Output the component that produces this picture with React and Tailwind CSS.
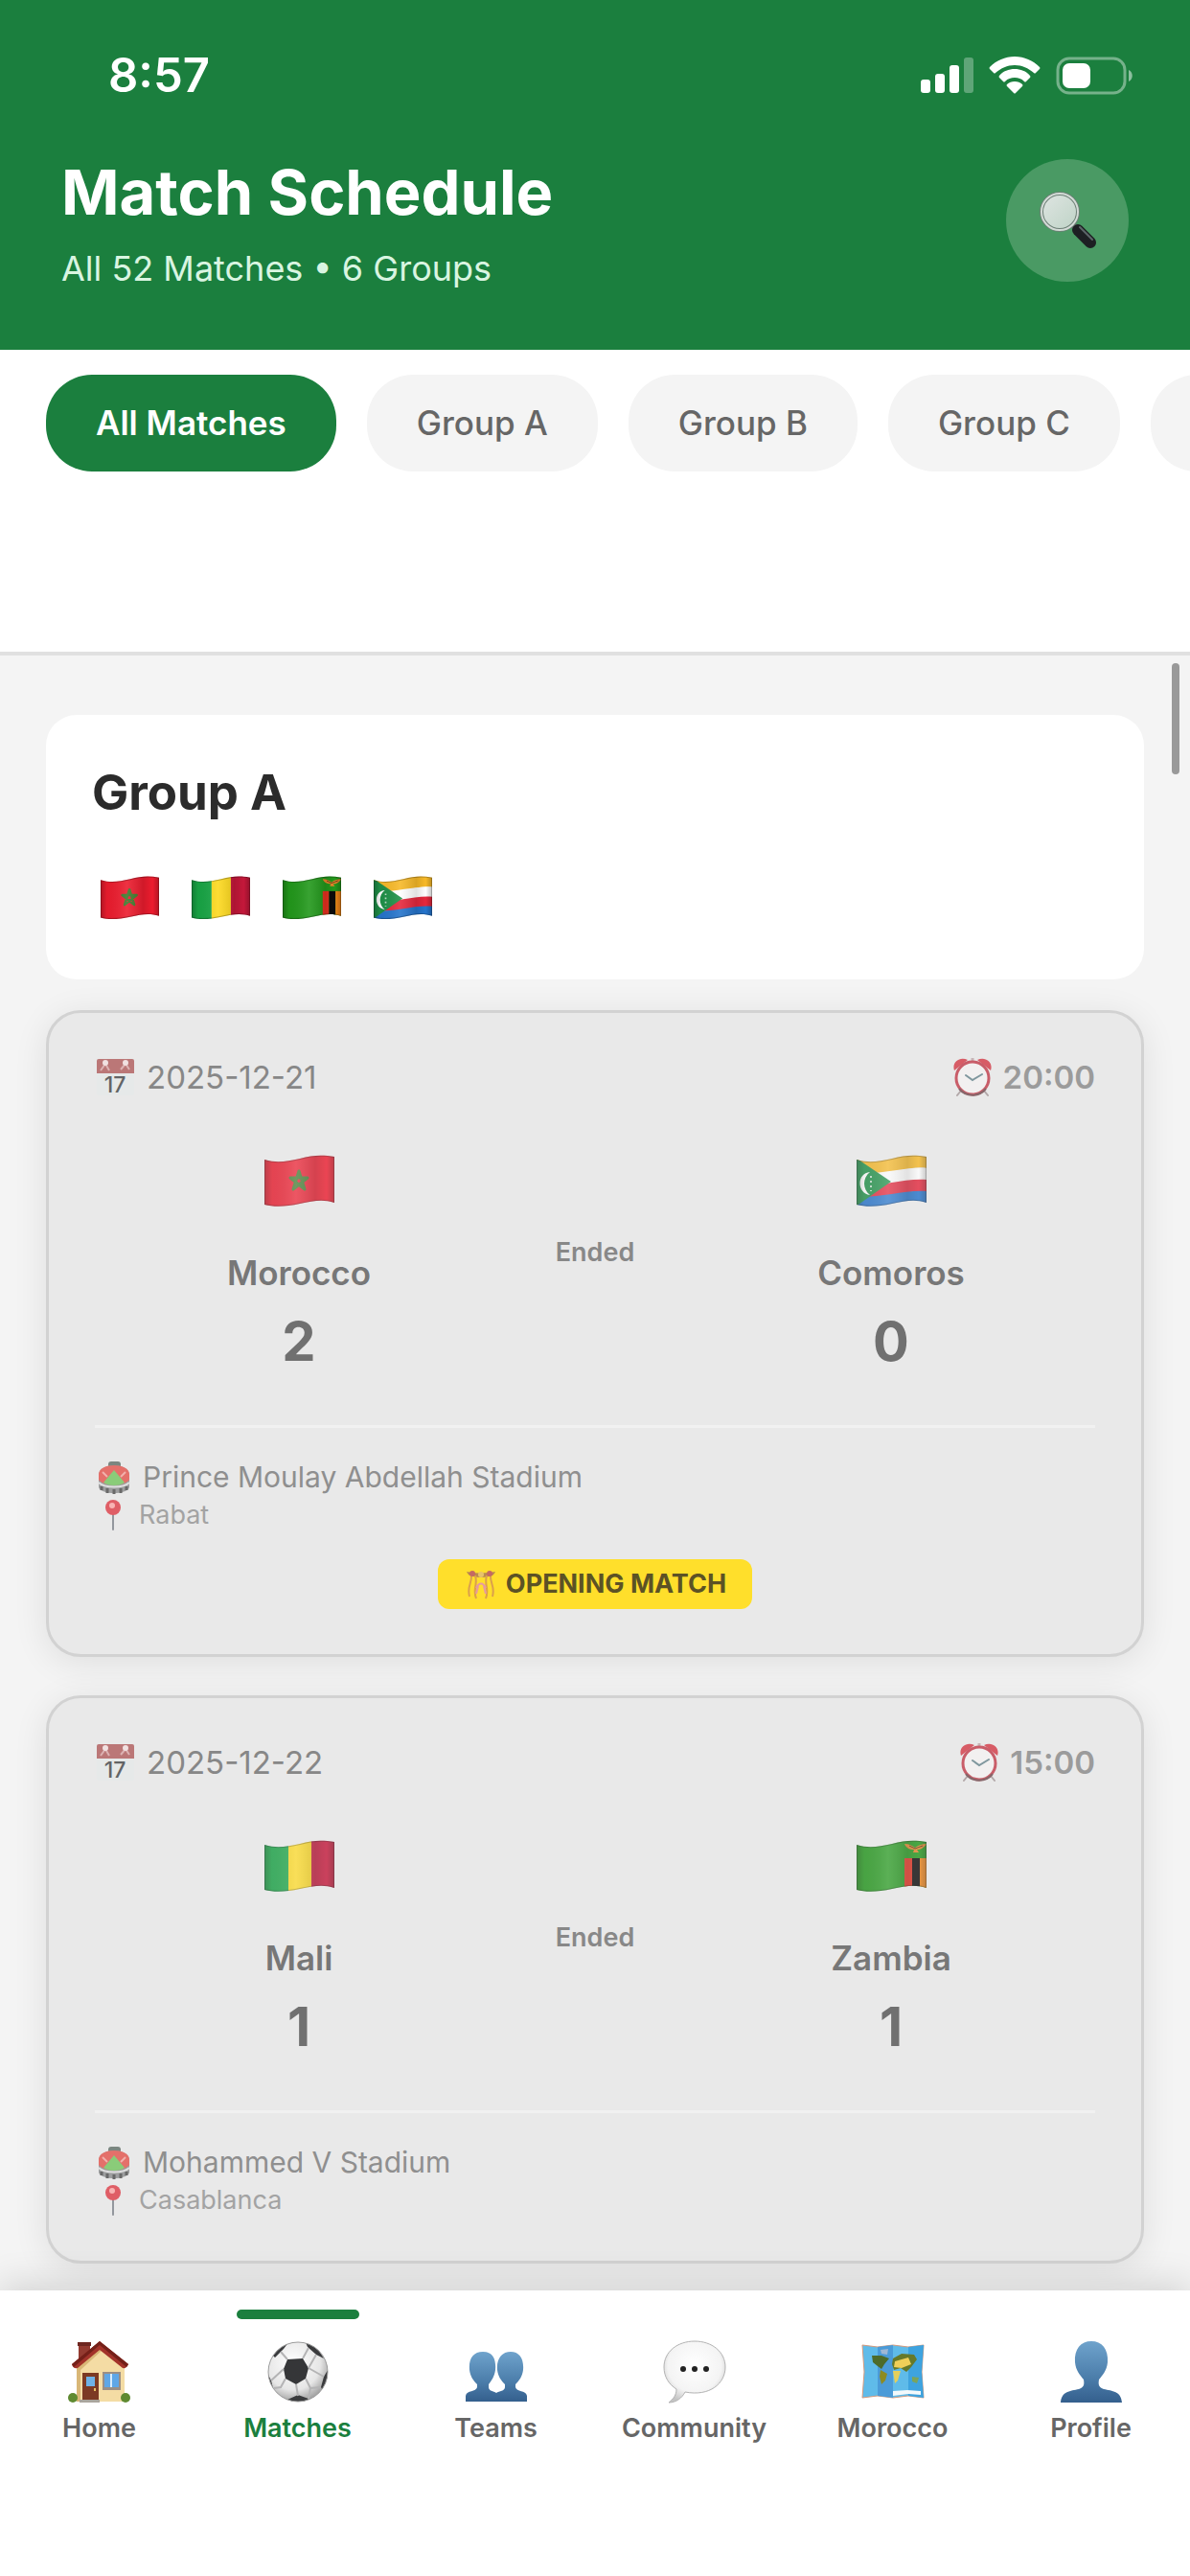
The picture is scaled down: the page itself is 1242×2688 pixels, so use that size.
import React, { useState } from "react";

const FLAG_SHAPE = "M1 5 C14 9 24 7 38 4 C52 0 62 0 74 2 V50 C62 46 52 48 38 51 C24 54 12 55 1 52 Z";

const FLAG_ART = {
  morocco: (
    <>
      <rect width="75" height="56" fill="#ec1c2e" />
      <path d="M37 17 L43 36 L28 24 L46 24 L31 36 Z" fill="none" stroke="#3f7a2c" strokeWidth="3" strokeLinejoin="round" />
    </>
  ),
  mali: (
    <>
      <rect width="26" height="56" fill="#18a545" />
      <rect x="26" width="24" height="56" fill="#fdd91e" />
      <rect x="50" width="25" height="56" fill="#c4183a" />
    </>
  ),
  zambia: (
    <>
      <rect width="75" height="56" fill="#22981b" />
      <rect x="51" y="19" width="8" height="37" fill="#e5301f" />
      <rect x="59" y="19" width="8" height="37" fill="#0d0b0b" />
      <rect x="67" y="19" width="8" height="37" fill="#f08519" />
      <path d="M51 4 C56 4 59 6 62 8 C65 6 69 4 74 4 C71 9 67 10 64 10 L66 13 H60 L61 10 C57 10 53 9 51 4 Z" fill="#e8842a" />
      <path d="M56 6 L62 9 L70 6" fill="none" stroke="#5a3a14" strokeWidth="1" />
    </>
  ),
  comoros: (
    <>
      <path d="M0 0 H75 V14 C58 11 44 19 25 20 L0 20 Z" fill="#f7b928" />
      <path d="M0 19 C28 21 52 12 75 14 V26 C56 24 44 32 20 33 L0 33 Z" fill="#fff" />
      <path d="M0 33 C28 33 52 24 75 26 V39 C56 36 42 44 20 44 L0 44 Z" fill="#e5283d" />
      <path d="M0 44 C28 45 52 36 75 38 V56 H0 Z" fill="#2574cc" />
      <path d="M0 3 L37 28 L0 54 Z" fill="#1f9148" />
      <path d="M15 18 C1 19 1 40 15 42 C7 36 7 24 15 18 Z" fill="#fff" />
      <path d="M16 22 V38" stroke="#fff" strokeWidth="2" strokeDasharray="2 3" opacity="0.7" />
    </>
  ),
};

const Flag = ({ code, id, className }) => (
  <svg viewBox="0 0 75 55" className={className} role="img" aria-label={code}>
    <defs>
      <clipPath id={`clip-${id}`}><path d={FLAG_SHAPE} /></clipPath>
      <linearGradient id={`shade-${id}`} x1="0" x2="1">
        <stop offset="0" stopColor="#000" stopOpacity="0.28" />
        <stop offset="0.12" stopColor="#000" stopOpacity="0.04" />
        <stop offset="0.45" stopColor="#fff" stopOpacity="0.1" />
        <stop offset="0.72" stopColor="#000" stopOpacity="0.12" />
        <stop offset="0.88" stopColor="#000" stopOpacity="0" />
        <stop offset="1" stopColor="#000" stopOpacity="0.28" />
      </linearGradient>
    </defs>
    <g clipPath={`url(#clip-${id})`}>
      {FLAG_ART[code]}
      <rect width="75" height="56" fill={`url(#shade-${id})`} />
      <path d={FLAG_SHAPE} fill="none" stroke="#000" strokeOpacity="0.25" strokeWidth="2" />
    </g>
  </svg>
);

const SignalIcon = () => (
  <svg viewBox="0 0 56 40" className="h-10 w-14" fill="#fff" aria-hidden="true">
    <rect x="1" y="24" width="10" height="14" rx="3" />
    <rect x="16" y="18" width="10" height="20" rx="3" />
    <rect x="31" y="9" width="10" height="29" rx="3" />
    <rect x="46" y="1" width="10" height="37" rx="3" opacity="0.3" />
  </svg>
);

const WifiIcon = () => (
  <svg viewBox="0 0 54 40" className="h-10 w-[54px]" fill="#fff" aria-hidden="true">
    <path d="M27 0 C17 0 8 4 1 11 Q0 12 1 13 L5 17 Q6 18 7 17 C13 12 19 9 27 9 C35 9 41 12 47 17 Q48 18 49 17 L53 13 Q54 12 53 11 C46 4 37 0 27 0 Z" />
    <path d="M27 13 C21 13 15 15 11 20 Q10 21 11 22 L15 26 Q16 27 17 26 C20 23 23 22 27 22 C31 22 34 23 37 26 Q38 27 39 26 L43 22 Q44 21 43 20 C39 15 33 13 27 13 Z" />
    <path d="M27 26 C24 26 21 27 19 29 Q18 30 19 31 L26 38 Q27 39 28 38 L35 31 Q36 30 35 29 C33 27 30 26 27 26 Z" />
  </svg>
);

const BatteryIcon = () => (
  <svg viewBox="0 0 82 40" className="h-10 w-[82px]" aria-hidden="true">
    <rect x="2" y="2" width="70" height="36" rx="12" fill="none" stroke="#fff" strokeOpacity="0.4" strokeWidth="3" />
    <rect x="7" y="7" width="29" height="26" rx="7" fill="#fff" />
    <path d="M76 14 C81 16 81 24 76 26 Z" fill="#fff" fillOpacity="0.5" />
  </svg>
);

const SearchIcon = () => (
  <svg viewBox="0 0 60 62" className="h-[62px] w-[60px]" aria-hidden="true">
    <defs>
      <linearGradient id="lens" x1="0" y1="0" x2="1" y2="1">
        <stop offset="0" stopColor="#dfe5e2" />
        <stop offset="1" stopColor="#bed3c6" />
      </linearGradient>
    </defs>
    <path d="M36 36 L43 43" stroke="#6d7b74" strokeWidth="6" />
    <path d="M41 41 L54 54" stroke="#1d2023" strokeWidth="12" strokeLinecap="round" />
    <path d="M43 38 L56 51" stroke="#5d6569" strokeWidth="2" strokeLinecap="round" />
    <circle cx="22" cy="22" r="19" fill="url(#lens)" stroke="#6d7f76" strokeWidth="4" />
    <circle cx="22" cy="22" r="19" fill="none" stroke="#d3dbd6" strokeWidth="2" />
  </svg>
);

const CalendarIcon = () => (
  <svg viewBox="0 0 44 44" className="size-11 opacity-70" aria-hidden="true">
    <rect x="2" y="3" width="39" height="38" rx="2" fill="#e6e9e9" />
    <path d="M2 18 V5 Q2 3 4 3 H39 Q41 3 41 5 V18 Z" fill="#a84848" />
    <path d="M6 15 L11 8 L15 15 M27 14 L32 8 L36 14" fill="none" stroke="#d79c9c" strokeWidth="2" />
    <circle cx="11" cy="7" r="3" fill="#f5dfdf" />
    <circle cx="32" cy="7" r="3" fill="#f5dfdf" />
    <text x="21" y="38" textAnchor="middle" fontFamily="Inter, sans-serif" fontSize="23" fontWeight="500" fill="#2b2d2f">17</text>
  </svg>
);

const ClockIcon = () => (
  <svg viewBox="0 0 44 44" className="size-11 opacity-70" aria-hidden="true">
    <path d="M10 36 L6 41 M34 36 L38 41" stroke="#9c8d8e" strokeWidth="2" strokeLinecap="round" />
    <path d="M3 15 C0 6 9 0 17 4 Z M41 15 C44 6 35 0 27 4 Z" fill="#d0212f" />
    <path d="M22 2 V7" stroke="#b9a0a2" strokeWidth="3" />
    <circle cx="22" cy="23" r="17" fill="#f7f4f3" stroke="#bc2333" strokeWidth="3" />
    <path d="M8 34 A18 18 0 0 0 36 34" fill="none" stroke="#5d3035" strokeWidth="2" />
    <path d="M15 20 L22 25 L32 19" fill="none" stroke="#53757f" strokeWidth="2" strokeLinecap="round" />
  </svg>
);

const StadiumIcon = () => (
  <svg viewBox="0 0 40 40" className="size-10 opacity-70" aria-hidden="true">
    <rect x="14" y="4" width="13" height="7" rx="3" fill="#4d5d55" />
    <path d="M4 18 C4 5 36 5 36 18 V31 C33 39 7 39 4 31 Z" fill="#7d7f80" />
    <path d="M4 17 C5 5 35 5 36 17 V23 C32 30 8 30 4 23 Z" fill="#e23d35" />
    <path d="M9 26 L20 13 L31 26 C26 30 14 30 9 26 Z" fill="#62c04b" />
    <path d="M4 26 C10 32 30 32 36 26" fill="none" stroke="#dcdcdc" strokeWidth="2" />
    <path d="M7 30 V34 M13 32 V37 M20 33 V38 M27 32 V37 M33 30 V34" stroke="#333" strokeWidth="3" />
    <path d="M8 15 L13 20 M32 15 L27 20" stroke="#f59a93" strokeWidth="2" />
  </svg>
);

const PinIcon = () => (
  <svg viewBox="0 0 36 36" className="size-9 opacity-70" aria-hidden="true">
    <path d="M19 17 V33" stroke="#70757d" strokeWidth="2" strokeLinecap="round" />
    <circle cx="19" cy="10" r="8" fill="#dc2430" />
    <circle cx="18" cy="8" r="3" fill="#ff9d9d" />
  </svg>
);

const ConfettiIcon = () => (
  <svg viewBox="0 0 36 36" className="size-9" aria-hidden="true">
    <path d="M3 5 Q18 8 33 5 Q31 10 26 10 Q18 12 10 10 Q5 10 3 5 Z" fill="#b98a4e" />
    <path d="M8 8 C9 17 3 20 6 31 M12 9 C15 19 9 23 13 33 M24 9 C21 19 27 23 23 33 M28 8 C27 17 33 20 30 31" fill="none" stroke="#dba04c" strokeWidth="2" />
    <path d="M13 22 C16 16 20 16 23 22 L19 17 M15 20 L13 28 M21 20 L23 28" fill="none" stroke="#e79aa0" strokeWidth="2" />
    <circle cx="9" cy="7" r="3" fill="#c46a63" />
    <circle cx="27" cy="7" r="3" fill="#c46a63" />
    <circle cx="18" cy="8" r="3" fill="#e8c36b" />
  </svg>
);

const HomeIcon = () => (
  <svg viewBox="0 0 66 66" className="size-[66px]" aria-hidden="true">
    <path d="M11 3 H23 V22 H11 Z" fill="#933a30" />
    <path d="M10 2 H24 V6 H10 Z" fill="#6e2721" />
    <path d="M9 28 L33 7 L59 28 V64 H9 Z" fill="#f4dca4" />
    <path d="M9 28 L33 7 L36 10 L13 31 V64 H9 Z" fill="#d9b777" />
    <path d="M33 1 L63 25 Q61 30 57 29 L33 10 L10 29 Q5 30 4 25 Z" fill="#a3332a" />
    <path d="M33 1 L63 25 L61 28 L33 5 L6 28 L4 25 Z" fill="#742019" />
    <rect x="15" y="34" width="17" height="30" fill="#7c3a24" />
    <rect x="19" y="38" width="9" height="10" fill="#6fb2e6" />
    <rect x="27" y="50" width="2" height="3" fill="#e8c163" />
    <rect x="36" y="33" width="19" height="19" fill="#9b8f84" />
    <rect x="38" y="35" width="15" height="14" fill="#5fa7e6" />
    <path d="M45 35 V49" stroke="#d9ecfb" strokeWidth="2" />
    <path d="M12 62 H33 V65 H12 Z" fill="#aaa59d" />
    <circle cx="5" cy="60" r="5" fill="#5f8a31" />
    <circle cx="60" cy="60" r="5" fill="#5f8a31" />
  </svg>
);

const BallIcon = () => (
  <svg viewBox="0 0 66 66" className="size-[66px]" aria-hidden="true">
    <defs>
      <radialGradient id="ball" cx="0.42" cy="0.35" r="0.65">
        <stop offset="0" stopColor="#ffffff" />
        <stop offset="0.7" stopColor="#e6e6e6" />
        <stop offset="1" stopColor="#a5a5a5" />
      </radialGradient>
      <clipPath id="ball-clip"><circle cx="33" cy="33" r="31" /></clipPath>
    </defs>
    <circle cx="33" cy="33" r="31" fill="url(#ball)" />
    <g clipPath="url(#ball-clip)">
      <path d="M22 20 L38 19 L44 29 L41 40 L31 46 L20 40 L18 30 Z" fill="#353638" />
      <path d="M40 0 L53 8 L60 19 L52 15 L43 7 Z M24 1 L18 9 L9 18 L6 15 L13 5 Z M66 28 L60 38 L57 49 L61 56 L66 46 Z M1 34 L5 42 L8 54 L3 48 Z M22 62 L33 57 L44 61 L40 66 H26 Z" fill="#3a3b3d" />
      <path d="M22 20 L15 12 M38 19 L44 8 M44 29 L60 38 M41 40 L46 50 L44 61 M46 50 L57 49 M31 46 L33 58 M20 40 L15 49 L8 50 M18 30 L5 42 M44 29 L52 15" fill="none" stroke="#b4b4b5" strokeWidth="2" />
    </g>
    <circle cx="33" cy="33" r="31" fill="none" stroke="#9b9b9b" strokeWidth="1" />
  </svg>
);

const Blue = ({ id }) => (
  <defs>
    <linearGradient id={id} x1="0" y1="0" x2="0" y2="1">
      <stop offset="0" stopColor="#6fa3cc" />
      <stop offset="0.6" stopColor="#4b7daa" />
      <stop offset="1" stopColor="#345f8d" />
    </linearGradient>
  </defs>
);

const TeamsIcon = () => (
  <svg viewBox="0 0 66 66" className="size-[66px]" aria-hidden="true">
    <Blue id="team-blue" />
    <path
      d="M19 12 C9 12 4 19 5 31 C6 38 9 42 13 46 V49 C12 54 2 52 1 58 V64 H65 V58 C64 52 54 54 53 49 V46 C57 42 60 38 61 31 C62 19 57 12 48 12 C39 12 33 19 34 31 C35 38 38 42 42 46 V49 C42 53 36 53 33 55 C30 53 25 53 25 49 V46 C28 42 31 38 32 31 C33 19 29 12 19 12 Z"
      fill="url(#team-blue)"
    />
  </svg>
);

const ChatIcon = () => (
  <svg viewBox="0 0 66 66" className="size-[66px]" aria-hidden="true">
    <defs>
      <radialGradient id="bubble" cx="0.5" cy="0.4" r="0.62">
        <stop offset="0" stopColor="#ffffff" />
        <stop offset="0.7" stopColor="#f4f4f4" />
        <stop offset="1" stopColor="#c4c4c4" />
      </radialGradient>
    </defs>
    <path d="M33 1 C15 1 1 12 1 28 C1 38 6 46 14 51 C14 57 11 61 6 65 C14 65 20 60 23 54 C49 59 65 45 65 28 C65 12 51 1 33 1 Z" fill="url(#bubble)" stroke="#b3b3b3" strokeWidth="1" />
    <circle cx="21" cy="30" r="3" fill="#222" />
    <circle cx="33" cy="30" r="3" fill="#222" />
    <circle cx="45" cy="30" r="3" fill="#222" />
  </svg>
);

const MapIcon = () => (
  <svg viewBox="0 0 66 66" className="size-[66px]" aria-hidden="true">
    <path d="M1 5 L17 7 L33 5 L49 7 L65 5 L63 33 L65 60 L49 58 L33 60 L17 58 L1 60 L3 33 Z" fill="#5fbbe9" stroke="#d59a7c" strokeWidth="1" />
    <path d="M17 7 L33 5 V60 L17 58 Z" fill="#4b9bd8" />
    <path d="M49 7 L65 5 L63 33 L65 60 L49 58 Z" fill="#3ea3df" />
    <path d="M11 16 L21 16 L29 19 L24 25 L21 30 L17 27 L12 23 Z" fill="#4d6b2a" />
    <path d="M20 31 L27 35 L25 42 L21 46 L19 38 Z" fill="#8d8b22" />
    <path d="M33 19 L42 14 L55 15 L58 20 L52 28 L47 33 L41 29 L34 31 L32 25 Z" fill="#66792a" />
    <path d="M35 22 L49 18 L52 25 L42 29 L34 28 Z" fill="#f0cf58" />
    <path d="M33 32 L41 32 L38 42 L35 45 Z" fill="#e4cf5b" />
    <path d="M53 38 L60 39 L58 45 L53 43 Z" fill="#7aa45c" />
    <path d="M33 53 L48 52 L62 53 V57 L49 56 L33 58 Z" fill="#f3f9fb" />
    <path d="M20 10 L28 9 L27 15 L21 14 Z" fill="#9fb7d4" />
  </svg>
);

const ProfileIcon = () => (
  <svg viewBox="0 0 66 66" className="size-[66px]" aria-hidden="true">
    <Blue id="profile-blue" />
    <path
      d="M33 1 C22 1 15 9 16 23 C17 32 21 36 25 41 C26 47 25 49 20 51 C11 53 2 53 1 65 H65 C64 53 55 53 46 51 C41 49 40 47 41 41 C45 36 49 32 50 23 C51 9 44 1 33 1 Z"
      fill="url(#profile-blue)"
    />
  </svg>
);

const filters = ["All Matches", "Group A", "Group B", "Group C", "Group D"];

const matches = [
  {
    date: "2025-12-21",
    time: "20:00",
    home: { name: "Morocco", flag: "morocco", score: 2 },
    away: { name: "Comoros", flag: "comoros", score: 0 },
    stadium: "Prince Moulay Abdellah Stadium",
    city: "Rabat",
    badge: "OPENING MATCH",
  },
  {
    date: "2025-12-22",
    time: "15:00",
    home: { name: "Mali", flag: "mali", score: 1 },
    away: { name: "Zambia", flag: "zambia", score: 1 },
    stadium: "Mohammed V Stadium",
    city: "Casablanca",
  },
];

const tabs = [
  { name: "Home", icon: HomeIcon },
  { name: "Matches", icon: BallIcon },
  { name: "Teams", icon: TeamsIcon },
  { name: "Community", icon: ChatIcon },
  { name: "Morocco", icon: MapIcon },
  { name: "Profile", icon: ProfileIcon },
];

const Team = ({ team, id }) => (
  <div className="flex flex-1 flex-col items-center">
    <Flag code={team.flag} id={id} className="mt-[22px] h-[55px] w-[75px] opacity-80" />
    <h3 className="mt-[46px] text-[35px] leading-[44px] font-semibold text-[#777]">{team.name}</h3>
    <p className="mt-[18px] text-[56px] leading-[64px] font-bold text-[#707070]">{team.score}</p>
  </div>
);

const MatchCard = ({ match }) => (
  <article className="rounded-[36px] border-3 border-[#d2d2d2] bg-[#e9e9e9] px-12 pt-[43px] pb-[43px] shadow-[0_6px_36px_rgba(0,0,0,0.09)]">
    <div className="flex items-center justify-between leading-[48px]">
      <div className="flex items-center gap-2.5 text-[33px] text-[#878787]">
        <CalendarIcon />
        <span>{match.date}</span>
      </div>
      <div className="flex items-center gap-2.5 text-[33px] font-semibold text-[#9b9b9b]">
        <ClockIcon />
        <span>{match.time}</span>
      </div>
    </div>

    <div className="mt-[35px] flex items-center">
      <Team team={match.home} id={match.home.flag} />
      <span className="w-48 text-center text-[27px] font-semibold text-[#888]">Ended</span>
      <Team team={match.away} id={match.away.flag} />
    </div>

    <div className="mt-[55px] border-t-3 border-[#f1f1f1] pt-[31px]">
      <div className="flex items-center gap-2.5 text-[30px] leading-[40px] text-[#8f8f8f]">
        <StadiumIcon />
        <span>{match.stadium}</span>
      </div>
      <div className="flex items-center gap-2.5 text-[27px] leading-[40px] text-[#a3a3a3]">
        <PinIcon />
        <span>{match.city}</span>
      </div>
    </div>

    {match.badge && (
      <div className="flex justify-center pt-[26px] pb-1">
        <span className="flex items-center gap-2 rounded-xl bg-[#ffdf2b] px-[27px] text-[27px] leading-[52px] font-bold text-[#5c5225]">
          <ConfettiIcon />
          {match.badge}
        </span>
      </div>
    )}
  </article>
);

const App = () => {
  const [activeFilter, setActiveFilter] = useState("All Matches");
  const [activeTab, setActiveTab] = useState("Matches");

  return (
    <div className="flex min-h-screen flex-col bg-[#f4f4f4] font-[Inter,sans-serif]">
      <header className="bg-[#1b7f3e] pb-[61px] text-white">
        <div className="flex h-[158px] items-center justify-between pr-[58px] pl-[113px]">
          <span className="text-[49px] font-semibold">8:57</span>
          <div className="flex items-center gap-4">
            <SignalIcon />
            <WifiIcon />
            <BatteryIcon />
          </div>
        </div>
        <div className="flex items-start justify-between px-16 pt-[7px]">
          <div>
            <h1 className="text-[65px] leading-[72px] font-bold">Match Schedule</h1>
            <p className="mt-[19px] text-[36px] leading-[48px] text-[#d9f5e1]">All 52 Matches • 6 Groups</p>
          </div>
          <button type="button" aria-label="Search matches" className="mt-px flex size-32 items-center justify-center rounded-full bg-[#4a9a64]">
            <SearchIcon />
          </button>
        </div>
      </header>

      <div className="flex gap-8 overflow-hidden border-b-4 border-[#e0e0e0] bg-white pt-[26px] pb-[188px] pl-12">
        {filters.map((filter) => (
          <button
            key={filter}
            type="button"
            onClick={() => setActiveFilter(filter)}
            className={`h-[101px] shrink-0 rounded-[48px] px-[52px] text-[35px] whitespace-nowrap ${
              activeFilter === filter
                ? "bg-[#1b7f3e] font-semibold text-white"
                : "bg-[#f4f4f4] font-medium text-[#666]"
            }`}
          >
            {filter}
          </button>
        ))}
      </div>

      <main className="relative flex-1 px-12 pt-[62px] pb-[28px]">
        <div className="absolute top-2 right-[11px] h-[116px] w-2 rounded-full bg-[#999]"></div>

        <section className="rounded-[32px] bg-white px-12 pt-[51px] pb-[62px]">
          <h2 className="text-[51px] leading-[60px] font-bold text-[#2b2b2b]">Group A</h2>
          <div className="mt-[57px] flex gap-8 pl-2">
            {["morocco", "mali", "zambia", "comoros"].map((code) => (
              <Flag key={code} code={code} id={`group-${code}`} className="h-[46px] w-[63px]" />
            ))}
          </div>
        </section>

        <div className="mt-8 flex flex-col gap-10">
          {matches.map((match) => (
            <MatchCard key={match.date} match={match} />
          ))}
        </div>
      </main>

      <nav className="relative grid grid-cols-6 bg-white pt-5 pb-[138px] shadow-[0_-6px_36px_rgba(0,0,0,0.14)]">
        {tabs.map((tab) => (
          <a
            key={tab.name}
            href={`#${tab.name.toLowerCase()}`}
            onClick={() => setActiveTab(tab.name)}
            className="flex flex-col items-center"
          >
            <span className={`h-[10px] w-32 rounded-full ${activeTab === tab.name ? "bg-[#1b7f3e]" : ""}`}></span>
            <span className="mt-[22px]"><tab.icon /></span>
            <span
              className={`mt-[10px] text-[27px] leading-[32px] font-semibold ${
                activeTab === tab.name ? "text-[#1b7f3e]" : "text-[#666]"
              }`}
            >
              {tab.name}
            </span>
          </a>
        ))}
      </nav>
    </div>
  );
};

export default App;
